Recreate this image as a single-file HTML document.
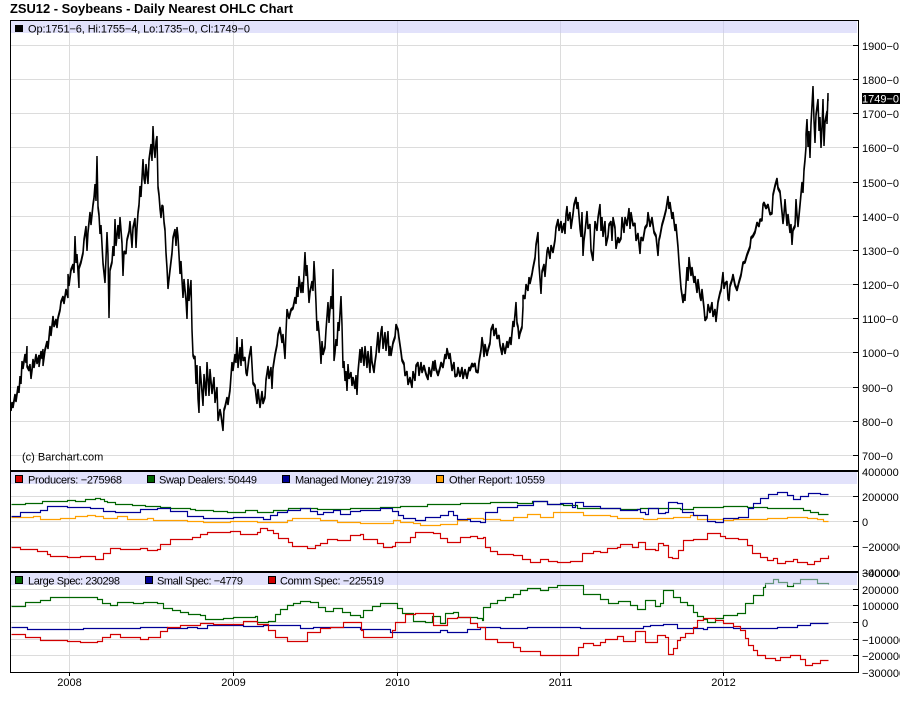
<!DOCTYPE html>
<html><head><meta charset="utf-8"><title>ZSU12 - Soybeans - Daily Nearest OHLC Chart</title>
<style>
html,body{margin:0;padding:0;background:#fff;width:900px;height:713px;overflow:hidden}
svg{display:block}
text{font-family:"Liberation Sans",Arial,sans-serif;font-size:11px;fill:#000}
.c path{fill:none;stroke-width:1.15}
</style></head><body>
<svg width="900" height="713" viewBox="0 0 900 713" xmlns="http://www.w3.org/2000/svg">
<defs><filter id="t" filterUnits="userSpaceOnUse" x="0" y="0" width="900" height="713"><feMorphology operator="dilate" radius="0 1"/></filter></defs>
<text x="10" y="13" style="font-size:13px;font-weight:bold" textLength="283" lengthAdjust="spacingAndGlyphs">ZSU12 - Soybeans - Daily Nearest OHLC Chart</text>

<!-- grid -->
<path fill="none" stroke="#dcdcdc" stroke-width="1" shape-rendering="crispEdges" d="M69.5 21V672M233.5 21V672M397.5 21V672M560.5 21V672M723.5 21V672
M11 45.5H858M11 79.5H858M11 113.5H858M11 147.5H858M11 182.5H858M11 216.5H858M11 250.5H858M11 284.5H858M11 318.5H858M11 352.5H858M11 387.5H858M11 421.5H858M11 455.5H858
M11 496.5H858M11 521.5H858M11 546.5H858
M11 589.5H858M11 605.5H858M11 622.5H858M11 639.5H858M11 655.5H858"/>

<!-- price -->
<polyline filter="url(#t)" fill="none" stroke="#000" stroke-width="1.5" stroke-linejoin="bevel" points="
11,410 12,403 13,407 15,395 16,401 18,387 19,392 20,377 21,383 22,362 23,368 25,355 26,362 27,347 27,366 29,370 30,365 31,378 32,370 33,360 34,367 36,355 37,363 39,356 39,366 41,352 42,358 43,350 43,365 45,350 47,342 48,348 50,327 51,335 53,317 54,326 56,320 57,327 58,318 60,310 61,302 63,297 64,303 66,290 68,297 68,275 69,285 71,270 73,265 74,272 75,237 76,262 77,255 79,287 79,268 81,262 83,253 84,240 86,227 87,250 88,232 90,213 91,224 93,205 94,198 95,185 96,200 97,157 98,207 99,215 100,233 101,226 103,263 105,282 106,258 107,233 108,255 109,317 110,270 112,262 113,247 114,255 115,220 116,245 118,226 119,238 120,218 122,243 123,275 124,252 126,253 127,240 129,232 130,222 132,247 133,228 135,219 136,247 137,228 138,213 139,205 140,187 141,196 143,160 144,178 145,183 146,165 148,183 149,160 151,145 152,160 153,127 154,148 155,157 156,142 157,137 158,187 159,195 160,208 161,217 162,206 163,207 164,222 165,230 166,253 167,268 168,288 170,270 172,253 173,238 175,230 176,245 177,228 178,237 179,255 180,273 181,262 182,280 183,297 184,280 186,300 187,318 188,280 189,300 191,281 192,330 193,355 194,358 195,357 196,383 197,366 198,398 199,412 200,367 202,392 203,405 204,375 206,395 207,363 209,395 210,370 212,393 214,378 215,402 217,388 218,420 220,410 221,415 223,430 224,410 225,407 227,398 228,404 230,390 231,376 232,363 233,370 235,355 236,362 237,338 238,367 240,348 241,365 242,340 243,360 245,358 246,372 247,375 249,358 251,347 252,365 253,383 255,386 256,395 257,403 258,390 260,407 262,392 263,403 265,397 266,380 268,367 269,378 271,368 272,388 273,368 275,355 277,345 278,335 280,328 282,342 283,335 285,358 286,332 287,310 289,318 291,310 293,308 295,298 296,303 297,288 298,296 299,277
301,292 302,283 303,292 305,253 306,275 307,266 309,302 310,292 312,282 313,290 314,262 315,280 316,303 317,330 318,322 319,332 320,345 321,363 322,342 323,354 325,347 326,330 328,303 329,322 331,297 332,308 333,270 334,360 335,352 336,340 337,345 338,323 339,330 341,297 342,325 343,367 344,362 345,380 346,372 347,390 348,365 349,378 351,373 352,385 353,378 355,388 356,376 357,394 358,372 360,350 361,362 362,348 364,365 365,347 367,367 368,352 370,372 371,347 372,362 374,372 375,362 376,355 378,333 379,352 381,332 382,327 383,348 385,333 386,350 388,332 389,355 390,347 391,355 393,343 395,337 396,325 398,330 399,338 400,345 401,352 402,360 404,364 405,375 407,372 408,384 410,378 412,387 413,372 415,380 416,366 418,363 419,375 421,363 422,372 424,366 426,374 428,379 429,368 431,376 433,362 434,370 435,361 436,369 438,375 440,368 441,363 443,367 445,355 446,358 447,349 449,358 450,354 452,370 454,363 455,376 457,375 458,368 460,376 462,368 463,378 465,370 467,378 469,368 470,370 472,364 473,366 475,364 476,371 478,372 479,362 481,350 482,338 483,345 484,356 485,345 487,355 488,350 490,343 491,330 493,325 494,335 496,329 497,338 499,336 500,345 502,354 503,344 505,353 507,342 508,347 510,338 511,344 513,322 514,326 516,303 517,323 518,327 519,338 520,333 522,327 523,307 523,296 525,298 526,285 528,290 529,278 530,283 532,274 533,268 535,258 536,245 538,233 539,265 541,293 542,272 544,265 545,276 547,252 548,248 550,258 551,246 553,252 555,240 556,228 558,220 559,230 561,222 562,232 564,224 565,233 566,215 567,207 568,220 570,213 571,228 573,214 574,205 576,198 577,208 578,203 580,228 581,236 582,213 583,255 584,240 585,232 587,212 588,228 590,225 591,250 593,260 594,240 595,222 597,230 598,218 600,205 601,230 602,218 603,236 605,222 606,245 608,236 609,225 611,222 612,240 613,218 615,228 616,248 618,238 619,242 621,238 622,218 624,232 625,218 627,225 629,209 630,228 631,213 633,225 635,224 636,240 638,234 640,253 641,238 643,240 645,228 647,225 648,213 650,226 652,218 654,232 656,236 658,255 659,240 660,236 662,225 664,218 666,210 668,197 669,208 670,203 672,218 673,213 675,230 676,225 678,247 679,262 680,275 681,288 683,302 684,295 685,300 687,268 688,280 689,258 691,275 692,268 694,282 695,277 697,292 698,280 700,296 701,300 702,290 704,308 705,320 707,317 708,305 710,312 712,303 713,316 715,310 716,321 717,312 718,302 720,293 721,290 723,273 724,288 725,284 727,282 728,298 729,300 730,286 732,280 733,275 735,285 737,290 739,282 741,275 743,263 745,262 747,255 750,247 751,238 753,236 755,232 757,223 759,226 760,220 762,220 763,205 764,203 766,208 768,205 770,214 772,213 773,195 775,186 777,179 778,188 780,192 782,212 783,223 784,214 785,200 787,225 788,215 790,232 791,225 792,244 793,230 795,226 796,200 797,215 798,226 800,205 802,183 803,192 804,170 805,160 806,147 806,135 807,120 808,146 809,132 810,157 811,124 813,87 814,120 815,142 816,115 818,100 819,130 820,118 821,147 822,128 823,100 824,145 825,122 827,112 827,123 828,94 828,100"/>

<g class="c" transform="translate(.5 .5)">
<!-- panel 2 -->
<path stroke="#006400" d="M11 504H25V503H42V501H67V500H75V501H85V499H95V498H100V499H104V501H107V502H115V504H132V505H145V506H160V507H170V508H190V509H195V510H213V511H227V512H245V510H257V512H273V510H288V508H317V509H350V508H380V507H400V506H427V504H460V503H490V502H517V503H532V501H547V504H563V505H577V508H620V509H640V508H680V509H693V507H723V506H747V507H767V508H803V510H810V512H818V514H828"/>
<path stroke="#ffa000" d="M11 517H33V516H40V519H60V518H75V516H87V515H95V516H103V518H117V516H127V519H147V518H153V520H187V521H203V522H230V521H257V522H287V520H292V518H320V520H337V522H360V523H393V520H400V522H413V523H420V525H440V524H457V520H467V518H483V519H500V520H513V517H527V514H540V517H553V512H577V512H583V515H610V516H617V518H643V519H657V518H673V517H690V515H697V519H723V520H733V519H767V518H787V517H807V518H817V519H823V521H828"/>
<path stroke="#000096" d="M11 516H20V512H40V510H47V506H67V507H90V508H103V511H115V512H140V509H157V508H170V511H187V516H203V518H233V517H263V519H270V515H277V512H287V510H300V508H310V511H317V514H323V512H333V510H340V514H350V511H360V510H380V508H392V511H398V515H403V518H415V520H425V517H440V515H448V511H453V515H457V519H470V521H480V522H485V512H497V507H517V505H533V501H547V504H560V503H572V507H575V502H583V506H600V508H620V510H637V509H640V512H645V514H648V508H658V513H665V512H668V502H677V503H682V512H693V515H707V521H715V522H723V518H738V517H748V508H753V503H760V498H768V494H777V492H787V495H793V499H800V496H808V493H820V494H828"/>
<path stroke="#d20000" d="M11 547H20V549H37V551H47V554H50V556H67V557H80V556H95V559H103V553H110V548H120V549H140V548H147V550H157V549H160V544H170V539H192V537H200V534H207V532H230V531H240V534H257V532H260V528H267V530H273V533H278V538H288V542H292V546H307V548H315V545H320V543H327V539H337V540H350V535H360V534H363V539H377V543H383V547H392V546H395V542H410V537H415V532H433V533H440V538H447V542H460V537H470V536H477V538H483V537H485V547H490V551H497V554H513V555H522V559H530V562H540V559H548V561H557V562H570V561H582V553H593V551H600V552H607V548H617V547H620V544H632V547H638V542H645V549H655V550H658V543H663V545H668V557H672V558H678V550H683V540H693V539H707V533H720V536H725V538H738V539H747V545H752V553H760V557H767V560H773V558H777V563H785V561H793V559H797V562H807V564H814V561H820V558H828V555"/>
<!-- panel 3 -->
<path stroke="#006400" d="M11 606H25V602H40V600H50V597H87V597H97V599H102V603H110V605H117V602H133V603H143V602H157V603H163V608H172V610H180V612H188V614H200V615H205V619H223V618H233V617H255V616H257V622H268V621H275V614H280V609H287V605H293V603H300V601H310V602H318V607H325V611H333V608H342V612H350V615H360V617H363V610H372V606H380V603H392V603H397V608H402V613H413V621H425V622H432V616H440V623H445V613H453V612H458V617H477V618H482V620H483V607H490V603H497V600H505V597H513V594H520V590H527V588H540V590H548V587H557V585H578V585H583V594H600V599H608V603H618V601H630V605H637V609H645V600H655V606H660V603H663V590H673V597H680V602H687V605H693V612H697V616H703V619H707V622H715V618H723V615H737V613H745V603H753V595H763V587H765V583H773V579H778V582H787V586H793V583H800V579H817V583H828V584"/>
<path stroke="#000096" d="M11 627H27V629H83V628H140V627H167V628H187V627H197V628H207V625H243V626H263V625H300V628H313V627H360V629H390V632H440V630H447V632H467V629H480V627H500V628H527V627H580V628H643V626H650V625H663V624H677V628H703V629H707V627H733V628H777V627H797V625H810V623H828"/>
<path stroke="#d20000" d="M11 634H25V637H40V640H67V641H80V642H97V641H102V637H110V634H120V637H140V639H148V637H160V631H167V627H180V625H200V623H213V624H243V621H257V624H268V630H275V637H287V641H307V632H320V628H330V627H343V622H361V630H363V637H392V630H395V622H405V614H415V613H433V625H447V618H457V617H470V623H477V627H485V639H497V642H513V647H520V651H540V655H557V655H578V647H583V643H593V645H600V642H605V639H617V636H623V641H635V631H645V642H657V635H665V637H668V654H673V648H677V640H680V637H685V633H693V627H697V620H703V618H715V620H723V623H733V626H740V630H745V638H748V645H753V650H757V655H765V658H775V660H780V657H790V655H800V659H805V665H812V663H820V660H828"/>
</g>

<!-- translucent bands -->
<rect x="11" y="21" width="846" height="12" fill="#c6c6f7" fill-opacity=".5"/>
<rect x="11" y="472" width="846" height="12" fill="#c6c6f7" fill-opacity=".5"/>
<rect x="11" y="573" width="846" height="12" fill="#c6c6f7" fill-opacity=".5"/>

<!-- frame -->
<g fill="#000" shape-rendering="crispEdges">
<rect x="10" y="20" width="849" height="1"/>
<rect x="10" y="20" width="1" height="653"/>
<rect x="858" y="20" width="1" height="653"/>
<rect x="10" y="672" width="849" height="1"/>
<rect x="10" y="470" width="849" height="2"/>
<rect x="10" y="571" width="849" height="2"/>
</g>
<!-- ticks -->
<path fill="none" stroke="#000" stroke-width="1" shape-rendering="crispEdges" d="M853 45.5H858M853 79.5H858M853 113.5H858M853 147.5H858M853 182.5H858M853 216.5H858M853 250.5H858M853 284.5H858M853 318.5H858M853 352.5H858M853 387.5H858M853 421.5H858M853 455.5H858
M853 496.5H858M853 521.5H858M853 546.5H858
M853 589.5H858M853 605.5H858M853 622.5H858M853 639.5H858M853 655.5H858
M69.5 672V676M233.5 672V676M397.5 672V676M560.5 672V676M723.5 672V676"/>

<!-- legends -->
<rect x="15" y="25" width="8" height="7" fill="#000" shape-rendering="crispEdges"/>
<g stroke="#000" stroke-width="1" shape-rendering="crispEdges">
<rect x="15.5" y="475.5" width="7" height="7" fill="#d20000"/>
<rect x="147.5" y="475.5" width="7" height="7" fill="#006400"/>
<rect x="282.5" y="475.5" width="7" height="7" fill="#000096"/>
<rect x="436.5" y="475.5" width="7" height="7" fill="#ffa000"/>
<rect x="15.5" y="576.5" width="7" height="7" fill="#006400"/>
<rect x="145.5" y="576.5" width="7" height="7" fill="#000096"/>
<rect x="268.5" y="576.5" width="7" height="7" fill="#d20000"/>
</g>
<text x="28" y="32.5" textLength="222" lengthAdjust="spacing">Op:1751−6, Hi:1755−4, Lo:1735−0, Cl:1749−0</text>
<text x="22" y="460.5">(c) Barchart.com</text>
<text x="28" y="483.5" textLength="94" lengthAdjust="spacing">Producers: −275968</text>
<text x="159" y="483.5" textLength="98" lengthAdjust="spacing">Swap Dealers: 50449</text>
<text x="295" y="483.5" textLength="116" lengthAdjust="spacing">Managed Money: 219739</text>
<text x="449" y="483.5" textLength="96" lengthAdjust="spacing">Other Report: 10559</text>
<text x="28" y="584.5" textLength="92" lengthAdjust="spacing">Large Spec: 230298</text>
<text x="157" y="584.5" textLength="86" lengthAdjust="spacing">Small Spec: −4779</text>
<text x="280" y="584.5" textLength="104" lengthAdjust="spacing">Comm Spec: −225519</text>

<!-- right axis -->
<g>
<text x="862" y="50">1900−0</text>
<text x="862" y="84">1800−0</text>
<text x="862" y="118">1700−0</text>
<text x="862" y="152">1600−0</text>
<text x="862" y="187">1500−0</text>
<text x="862" y="221">1400−0</text>
<text x="862" y="255">1300−0</text>
<text x="862" y="289">1200−0</text>
<text x="862" y="323">1100−0</text>
<text x="862" y="357">1000−0</text>
<text x="862" y="392">900−0</text>
<text x="862" y="426">800−0</text>
<text x="862" y="460">700−0</text>
<text x="862" y="476">400000</text>
<text x="862" y="501">200000</text>
<text x="862" y="526">0</text>
<text x="862" y="551">−200000</text>
<text x="862" y="577">−400000</text>
<text x="862" y="577">300000</text>
<text x="862" y="594">200000</text>
<text x="862" y="610">100000</text>
<text x="862" y="627">0</text>
<text x="862" y="644">−100000</text>
<text x="862" y="660">−200000</text>
<text x="862" y="677">−300000</text>
</g>
<rect x="862" y="93" width="38" height="11" fill="#000" shape-rendering="crispEdges"/>
<text x="862" y="102.5" style="fill:#fff">1749−0</text>

<!-- years -->
<g text-anchor="middle">
<text x="69.5" y="686">2008</text>
<text x="233.5" y="686">2009</text>
<text x="397.5" y="686">2010</text>
<text x="560.5" y="686">2011</text>
<text x="723.5" y="686">2012</text>
</g>
</svg>
</body></html>
